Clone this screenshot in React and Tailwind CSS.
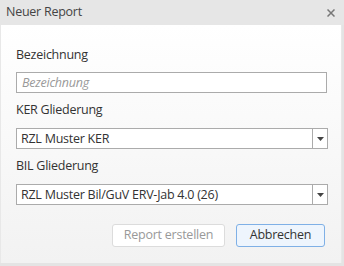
export default function App() {
  return (
    <div className="w-[344px] h-[266px] bg-[#e4e4e4] flex flex-col tracking-[-0.25px]" style={{ fontFamily: '"Open Sans", "Noto Sans", sans-serif' }}>
      <div className="h-[25px] flex items-center justify-between pl-[6px] pr-[9px] bg-[#e6e6e6]">
        <span className="text-[12.5px] text-[#444]">Neuer Report</span>
        <svg width="8" height="8" viewBox="0 0 8 8" className="text-[#777]">
          <path d="M0.5 0.5 L7.5 7.5 M7.5 0.5 L0.5 7.5" stroke="currentColor" strokeWidth="1.5" />
        </svg>
      </div>
      <div className="h-[238px] mr-[2px] border-l border-r border-[#e8e8e8] bg-gradient-to-b from-white to-[#f2f2f2] px-[15px] pt-[21px]">
        <div className="text-[12.5px] text-[#333] leading-[18px]">Bezeichnung</div>
        <input
          placeholder="Bezeichnung"
          className="block mt-[8px] w-[311px] h-[21px] border border-[#ababab] bg-white px-[5px] text-[12.5px] italic placeholder:text-[#999] outline-none"
        />
        <div className="mt-[8px] text-[12.5px] text-[#333] leading-[18px]">KER Gliederung</div>
        <Select value="RZL Muster KER" />
        <div className="mt-[8px] text-[12.5px] text-[#333] leading-[18px]">BIL Gliederung</div>
        <Select value="RZL Muster Bil/GuV ERV-Jab 4.0 (26)" />
        <div className="mt-[19px] flex justify-end gap-[11px] pr-[1px]">
          <button className="w-[113px] h-[23px] rounded-[3px] border border-[#dcdcdc] bg-white text-[12.5px] text-[#999]">Report erstellen</button>
          <button className="w-[89px] h-[23px] rounded-[3px] border border-[#7fb0e6] bg-[#eef5fd] text-[12.5px] text-[#333]">Abbrechen</button>
        </div>
      </div>
    </div>
  )
}

function Select({ value }) {
  return (
    <div className="mt-[9px] w-[312px] h-[21px] border border-[#ababab] bg-white flex items-stretch">
      <div className="flex-1 px-[4px] text-[12.5px] text-[#333] leading-[19px]">{value}</div>
      <div className="w-[15px] border-l border-[#ababab] flex items-center justify-center">
        <svg width="7" height="4" viewBox="0 0 7 4">
          <path d="M0 0 H7 L3.5 4 Z" fill="#444" />
        </svg>
      </div>
    </div>
  )
}
